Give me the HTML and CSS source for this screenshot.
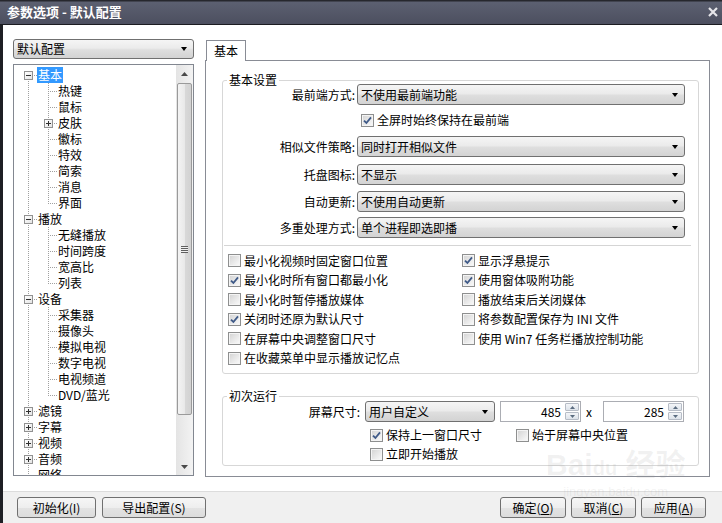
FILE: index.html
```html
<!DOCTYPE html>
<html lang="zh-CN">
<head>
<meta charset="utf-8">
<title>参数选项 - 默认配置</title>
<link rel="stylesheet" href="styles.css">
</head>
<body>
<div class="window">
  <div class="titlebar">
    <span class="title">参数选项 - 默认配置</span>
    <svg class="close" width="10" height="10" viewBox="0 0 10 10"><path d="M1 1 L9 9 M9 1 L1 9" stroke="#e6e6ea" stroke-width="2.2" fill="none"/></svg>
  </div>
  <div class="frame">
    <div class="content">
      <div class="leftcol">
        <div class="combo profile"><span class="combo-text">默认配置</span><span class="arrow"></span></div>
        <div class="treebox">
          <div class="tree">
            <div class="row"><span class="g1 root first"><span class="exp minus"></span></span><span class="lbl sel">基本</span></div>
            <div class="row"><span class="g1"></span><span class="g2"></span><span class="lbl">热键</span></div>
            <div class="row"><span class="g1"></span><span class="g2"></span><span class="lbl">鼠标</span></div>
            <div class="row"><span class="g1"></span><span class="g2"><span class="exp plus"></span></span><span class="lbl">皮肤</span></div>
            <div class="row"><span class="g1"></span><span class="g2"></span><span class="lbl">徽标</span></div>
            <div class="row"><span class="g1"></span><span class="g2"></span><span class="lbl">特效</span></div>
            <div class="row"><span class="g1"></span><span class="g2"></span><span class="lbl">简索</span></div>
            <div class="row"><span class="g1"></span><span class="g2"></span><span class="lbl">消息</span></div>
            <div class="row"><span class="g1"></span><span class="g2 last"></span><span class="lbl">界面</span></div>
            <div class="row"><span class="g1 root"><span class="exp minus"></span></span><span class="lbl">播放</span></div>
            <div class="row"><span class="g1"></span><span class="g2"></span><span class="lbl">无缝播放</span></div>
            <div class="row"><span class="g1"></span><span class="g2"></span><span class="lbl">时间跨度</span></div>
            <div class="row"><span class="g1"></span><span class="g2"></span><span class="lbl">宽高比</span></div>
            <div class="row"><span class="g1"></span><span class="g2 last"></span><span class="lbl">列表</span></div>
            <div class="row"><span class="g1 root"><span class="exp minus"></span></span><span class="lbl">设备</span></div>
            <div class="row"><span class="g1"></span><span class="g2"></span><span class="lbl">采集器</span></div>
            <div class="row"><span class="g1"></span><span class="g2"></span><span class="lbl">摄像头</span></div>
            <div class="row"><span class="g1"></span><span class="g2"></span><span class="lbl">模拟电视</span></div>
            <div class="row"><span class="g1"></span><span class="g2"></span><span class="lbl">数字电视</span></div>
            <div class="row"><span class="g1"></span><span class="g2"></span><span class="lbl">电视频道</span></div>
            <div class="row"><span class="g1"></span><span class="g2 last"></span><span class="lbl">DVD/蓝光</span></div>
            <div class="row"><span class="g1 root"><span class="exp plus"></span></span><span class="lbl">滤镜</span></div>
            <div class="row"><span class="g1 root"><span class="exp plus"></span></span><span class="lbl">字幕</span></div>
            <div class="row"><span class="g1 root"><span class="exp plus"></span></span><span class="lbl">视频</span></div>
            <div class="row"><span class="g1 root"><span class="exp plus"></span></span><span class="lbl">音频</span></div>
            <div class="row"><span class="g1 root lastroot"></span><span class="lbl">网络</span></div>
          </div>
          <div class="vscroll">
            <div class="sbtn"><svg width="7" height="4" viewBox="0 0 7 4"><path d="M0 4 L3.5 0 L7 4Z" fill="#4a4a4a"/></svg></div>
            <div class="track">
              <div class="thumb"><span class="grip"></span></div>
            </div>
            <div class="sbtn"><svg width="7" height="4" viewBox="0 0 7 4"><path d="M0 0 L3.5 4 L7 0Z" fill="#4a4a4a"/></svg></div>
          </div>
        </div>
      </div>

      <div class="rightcol">
        <div class="tabs"><div class="tab">基本</div></div>
        <div class="panel">
          <fieldset class="group g-basic">
            <legend>基本设置</legend>
            <div class="frow r1"><span class="flabel">最前端方式:</span><div class="combo wide"><span class="combo-text">不使用最前端功能</span><span class="arrow"></span></div></div>
            <div class="crow"><label class="chk"><span class="cb on"><svg width="11" height="11" viewBox="0 0 11 11"><path d="M2 5.6 L4.4 8 L9 2.4" stroke="#3f5a88" stroke-width="1.8" fill="none"/></svg></span>全屏时始终保持在最前端</label></div>
            <div class="frow r2"><span class="flabel">相似文件策略:</span><div class="combo wide"><span class="combo-text">同时打开相似文件</span><span class="arrow"></span></div></div>
            <div class="frow r3"><span class="flabel">托盘图标:</span><div class="combo wide"><span class="combo-text">不显示</span><span class="arrow"></span></div></div>
            <div class="frow r4"><span class="flabel">自动更新:</span><div class="combo wide"><span class="combo-text">不使用自动更新</span><span class="arrow"></span></div></div>
            <div class="frow r5"><span class="flabel">多重处理方式:</span><div class="combo wide"><span class="combo-text">单个进程即选即播</span><span class="arrow"></span></div></div>
            <div class="sep"></div>
            <div class="opts">
              <label class="chk"><span class="cb"></span>最小化视频时固定窗口位置</label>
              <label class="chk"><span class="cb on"><svg width="11" height="11" viewBox="0 0 11 11"><path d="M2 5.6 L4.4 8 L9 2.4" stroke="#3f5a88" stroke-width="1.8" fill="none"/></svg></span>最小化时所有窗口都最小化</label>
              <label class="chk"><span class="cb"></span>最小化时暂停播放媒体</label>
              <label class="chk"><span class="cb on"><svg width="11" height="11" viewBox="0 0 11 11"><path d="M2 5.6 L4.4 8 L9 2.4" stroke="#3f5a88" stroke-width="1.8" fill="none"/></svg></span>关闭时还原为默认尺寸</label>
              <label class="chk"><span class="cb"></span>在屏幕中央调整窗口尺寸</label>
              <label class="chk"><span class="cb"></span>在收藏菜单中显示播放记忆点</label>
              <label class="chk"><span class="cb on"><svg width="11" height="11" viewBox="0 0 11 11"><path d="M2 5.6 L4.4 8 L9 2.4" stroke="#3f5a88" stroke-width="1.8" fill="none"/></svg></span>显示浮悬提示</label>
              <label class="chk"><span class="cb on"><svg width="11" height="11" viewBox="0 0 11 11"><path d="M2 5.6 L4.4 8 L9 2.4" stroke="#3f5a88" stroke-width="1.8" fill="none"/></svg></span>使用窗体吸附功能</label>
              <label class="chk"><span class="cb"></span>播放结束后关闭媒体</label>
              <label class="chk"><span class="cb"></span>将参数配置保存为 INI 文件</label>
              <label class="chk"><span class="cb"></span>使用 Win7 任务栏播放控制功能</label>
            </div>
          </fieldset>

          <fieldset class="group g-first">
            <legend>初次运行</legend>
            <div class="srow">
              <span class="slabel">屏幕尺寸:</span>
              <div class="combo small"><span class="combo-text">用户自定义</span><span class="arrow"></span></div>
              <div class="spin"><span class="spin-val">485</span><span class="spin-btns"><span class="sb"><svg width="5" height="3" viewBox="0 0 5 3"><path d="M0 3 L2.5 0 L5 3Z" fill="#5b6c80"/></svg></span><span class="sb"><svg width="5" height="3" viewBox="0 0 5 3"><path d="M0 0 L2.5 3 L5 0Z" fill="#5b6c80"/></svg></span></span></div>
              <span class="times">x</span>
              <div class="spin"><span class="spin-val">285</span><span class="spin-btns"><span class="sb"><svg width="5" height="3" viewBox="0 0 5 3"><path d="M0 3 L2.5 0 L5 3Z" fill="#5b6c80"/></svg></span><span class="sb"><svg width="5" height="3" viewBox="0 0 5 3"><path d="M0 0 L2.5 3 L5 0Z" fill="#5b6c80"/></svg></span></span></div>
            </div>
            <div class="crow2">
              <label class="chk w146"><span class="cb on"><svg width="11" height="11" viewBox="0 0 11 11"><path d="M2 5.6 L4.4 8 L9 2.4" stroke="#3f5a88" stroke-width="1.8" fill="none"/></svg></span>保持上一窗口尺寸</label>
              <label class="chk"><span class="cb"></span>始于屏幕中央位置</label>
            </div>
            <div class="crow3">
              <label class="chk"><span class="cb"></span>立即开始播放</label>
            </div>
          </fieldset>
        </div>
      </div>
    </div>

    <div class="footer">
      <div class="btns-left">
        <button class="btn b-init">初始化(I)</button>
        <button class="btn b-export">导出配置(S)</button>
      </div>
      <div class="btns-right">
        <button class="btn b-ok">确定(<u>O</u>)</button>
        <button class="btn b-cancel">取消(<u>C</u>)</button>
        <button class="btn b-apply">应用(<u>A</u>)</button>
      </div>
    </div>
  </div>
  <div class="watermark"><span class="wm-big">Bai<span class="wm-du">du</span> 经验</span><span class="wm-small">jingyan.baidu.com</span></div>
</div>
</body>
</html>
```

FILE: styles.css
```css
* { box-sizing: border-box; }
html, body { margin: 0; padding: 0; }
body {
  width: 722px;
  height: 523px;
  overflow: hidden;
  font-family: "Noto Sans CJK SC", "Liberation Sans", sans-serif;
  font-size: 12px;
  color: #000;
  background: #fff;
}
.window {
  width: 722px;
  height: 523px;
  display: flex;
  flex-direction: column;
  position: relative;
}

/* title bar */
.titlebar {
  height: 25px;
  flex: none;
  display: flex;
  align-items: center;
  justify-content: space-between;
  padding: 0 4px 0 7px;
  background: linear-gradient(to bottom, #26272d 0, #26272d 1px, #5c6071 2px, #4c4f5f 100%);
  border-bottom: 1px solid #1b1c21;
  color: #fff;
  font-weight: bold;
  font-size: 13px;
}
.title { line-height: 16px; }
.close { display: block; }

/* frame */
.frame {
  flex: 1;
  display: flex;
  flex-direction: column;
  border-left: 3px solid #1e1f24;
  background: #fff;
}
.content {
  flex: 1;
  display: flex;
  padding: 14px 0 0 10px;
}

/* left column */
.leftcol {
  width: 181px;
  display: flex;
  flex-direction: column;
  gap: 5px;
}
.combo {
  display: flex;
  align-items: center;
  justify-content: space-between;
  height: 21px;
  border: 1px solid #707070;
  border-radius: 3px;
  background: linear-gradient(to bottom, #f5f5f5 0%, #ebebeb 45%, #dedede 55%, #d3d3d3 100%);
  padding: 0 6px 0 3px;
  line-height: 16px;
  white-space: nowrap;
}
.combo.profile { height: 20px; }
.arrow {
  width: 0;
  height: 0;
  border-left: 3.5px solid transparent;
  border-right: 3.5px solid transparent;
  border-top: 4px solid #000;
  flex: none;
}

.treebox {
  height: 412px;
  border: 1px solid #828790;
  display: flex;
  overflow: hidden;
}
.tree {
  flex: 1;
  padding-top: 2px;
  overflow: hidden;
}
.row {
  display: flex;
  height: 16px;
  line-height: 16px;
  white-space: nowrap;
}
.g1, .g2 {
  flex: none;
  height: 16px;
  display: flex;
  align-items: flex-start;
}
.g1 {
  width: 23px;
  background: repeating-linear-gradient(to bottom, #a0a0a0 0 1px, transparent 1px 2px) 14px 0 / 1px 16px no-repeat;
}
.g1.root {
  background:
    repeating-linear-gradient(to bottom, #a0a0a0 0 1px, transparent 1px 2px) 14px 0 / 1px 16px no-repeat,
    repeating-linear-gradient(to right, #a0a0a0 0 1px, transparent 1px 2px) 14px 8px / 9px 1px no-repeat;
}
.g1.root.first {
  background:
    repeating-linear-gradient(to bottom, #a0a0a0 0 1px, transparent 1px 2px) 14px 8px / 1px 8px no-repeat,
    repeating-linear-gradient(to right, #a0a0a0 0 1px, transparent 1px 2px) 14px 8px / 9px 1px no-repeat;
}
.g1.root.lastroot {
  background:
    repeating-linear-gradient(to bottom, #a0a0a0 0 1px, transparent 1px 2px) 14px 0 / 1px 8px no-repeat,
    repeating-linear-gradient(to right, #a0a0a0 0 1px, transparent 1px 2px) 14px 8px / 9px 1px no-repeat;
}
.g2 {
  width: 20px;
  background:
    repeating-linear-gradient(to bottom, #a0a0a0 0 1px, transparent 1px 2px) 11px 0 / 1px 16px no-repeat,
    repeating-linear-gradient(to right, #a0a0a0 0 1px, transparent 1px 2px) 11px 8px / 9px 1px no-repeat;
}
.g2.last {
  background:
    repeating-linear-gradient(to bottom, #a0a0a0 0 1px, transparent 1px 2px) 11px 0 / 1px 9px no-repeat,
    repeating-linear-gradient(to right, #a0a0a0 0 1px, transparent 1px 2px) 11px 8px / 9px 1px no-repeat;
}
.exp {
  width: 9px;
  height: 9px;
  margin-top: 4px;
  border: 1px solid #919191;
  flex: none;
}
.g1 .exp { margin-left: 10px; }
.g2 .exp { margin-left: 7px; }
.exp.minus {
  background:
    linear-gradient(#2f2f2f, #2f2f2f) 1px 3px / 5px 1px no-repeat,
    linear-gradient(135deg, #ffffff 0%, #e4e4e4 100%);
}
.exp.plus {
  background:
    linear-gradient(#2f2f2f, #2f2f2f) 1px 3px / 5px 1px no-repeat,
    linear-gradient(#2f2f2f, #2f2f2f) 3px 1px / 1px 5px no-repeat,
    linear-gradient(135deg, #ffffff 0%, #e4e4e4 100%);
}
.lbl {
  padding: 0 1px;
  height: 16px;
}
.lbl.sel {
  background: #3399ff;
  color: #fff;
}

/* scrollbar */
.vscroll {
  width: 17px;
  flex: none;
  display: flex;
  flex-direction: column;
  background: linear-gradient(to right, #e4e4e4 0%, #f3f3f3 100%);
}
.sbtn {
  height: 17px;
  flex: none;
  display: flex;
  align-items: center;
  justify-content: center;
}
.sbtn svg { display: block; }
.track {
  flex: 1;
  padding: 1px 1px 0 1px;
}
.thumb {
  height: 332px;
  border: 1px solid #9a9a9a;
  border-radius: 2px;
  background: linear-gradient(to right, #f4f4f4 0%, #e9e9e9 50%, #d9d9d9 51%, #d2d2d2 100%);
  display: flex;
  align-items: center;
  justify-content: center;
}
.grip {
  width: 7px;
  height: 7px;
  background: repeating-linear-gradient(to bottom, #5f5f5f 0 1px, #f0f0f0 1px 2px);
}

/* right column */
.rightcol {
  width: 505px;
  margin-left: 11px;
  display: flex;
  flex-direction: column;
}
.tabs {
  display: flex;
  height: 22px;
  padding: 1px 0 0 1px;
  margin-bottom: -1px;
  position: relative;
  z-index: 1;
}
.tab {
  height: 21px;
  padding: 0 7px;
  border: 1px solid #898c95;
  border-bottom: none;
  background: #fff;
  line-height: 19px;
}
.panel {
  height: 417px;
  border: 1px solid #898c95;
  padding: 0 10px 0 16px;
}

.group {
  margin: 0;
  padding: 0 0 0 0;
  border: 1px solid #d7d7d7;
  border-radius: 3px;
  min-width: 0;
}
.group legend {
  margin-left: 4px;
  padding: 0 2px;
  line-height: 16px;
  font-size: 12px;
}
.g-basic {
  margin-top: 11px;
  height: 302px;
}
.frow {
  display: flex;
  align-items: center;
  height: 21px;
}
.flabel {
  width: 134px;
  text-align: right;
  padding-right: 2px;
  white-space: nowrap;
}
.combo.wide { width: 328px; }
.r1 { margin-top: -4px; }
.r2 { margin-top: 8px; }
.r3 { margin-top: 7px; }
.r4 { margin-top: 6px; }
.r5 { margin-top: 5px; }
.crow {
  height: 16px;
  margin: 7px 0 0 138px;
  display: flex;
}
.sep {
  height: 1px;
  margin: 7px 7px 0 1px;
  background: #d5d5d5;
}

.chk {
  display: flex;
  align-items: center;
  gap: 3px;
  white-space: nowrap;
  line-height: 16px;
}
.cb {
  width: 13px;
  height: 13px;
  flex: none;
  border: 1px solid #8e8f8f;
  background: linear-gradient(135deg, #d2d2d2 0%, #e9e9e9 55%, #fbfbfb 100%);
  box-shadow: inset 0 0 0 1px #f4f4f4;
  display: flex;
  align-items: center;
  justify-content: center;
}
.cb svg { display: block; }

.opts {
  display: grid;
  grid-template-columns: 234px 1fr;
  grid-template-rows: repeat(6, 19.5px);
  grid-auto-flow: column;
  margin: 5px 0 0 5px;
}

/* first run group */
.g-first {
  margin-top: 14px;
  height: 78px;
}
.srow {
  display: flex;
  align-items: center;
  height: 21px;
  margin-top: -3px;
}
.slabel {
  width: 142px;
  text-align: right;
  padding-right: 5px;
  white-space: nowrap;
}
.combo.small { width: 130px; }
.spin {
  width: 81px;
  height: 21px;
  margin-left: 5px;
  border: 1px solid #abadb3;
  background: #fff;
  display: flex;
  align-items: stretch;
}
.spin-val {
  flex: 1;
  text-align: right;
  line-height: 19px;
  padding-right: 4px;
}
.spin-btns {
  width: 15px;
  display: flex;
  flex-direction: column;
  padding: 1px 1px 1px 0;
  gap: 1px;
}
.sb {
  flex: 1;
  border: 1px solid #b6bcc6;
  border-radius: 1px;
  background: linear-gradient(to bottom, #f3f5f8, #dde3ea);
  display: flex;
  align-items: center;
  justify-content: center;
}
.sb svg { display: block; }
.times {
  width: 17px;
  text-align: left;
  padding-left: 5px;
}
.crow2 {
  display: flex;
  height: 16px;
  margin: 5px 0 0 147px;
}
.w146 { width: 146px; }
.crow3 {
  display: flex;
  height: 16px;
  margin: 3px 0 0 147px;
}

/* footer */
.footer {
  height: 32px;
  flex: none;
  border-top: 1px solid #dcdcdc;
  background: #f0f0f0;
  display: flex;
  padding: 5px 16px 0 14px;
}
.btns-left, .btns-right {
  display: flex;
  gap: 6px;
  height: 21px;
}
.btns-right { margin-left: auto; gap: 5px; }
.btn {
  height: 21px;
  border: 1px solid #707070;
  border-radius: 3px;
  background: linear-gradient(to bottom, #f6f6f6 0%, #eeeeee 50%, #e3e3e3 51%, #dcdcdc 100%);
  font-family: "Noto Sans CJK SC", "Liberation Sans", sans-serif;
  font-size: 12px;
  line-height: 16px;
  color: #000;
  padding: 0;
}
.b-init { width: 79px; }
.b-export { width: 104px; }
.b-ok { width: 66px; }
.b-cancel { width: 65px; }
.b-apply { width: 65px; }

/* watermark overlay */
.watermark {
  position: absolute;
  left: 546px;
  top: 448px;
  display: flex;
  flex-direction: column;
  align-items: center;
  color: rgba(150, 150, 150, 0.13);
  pointer-events: none;
}
.wm-big {
  font-family: "Liberation Sans", "Noto Sans CJK SC", sans-serif;
  font-size: 30px;
  font-weight: bold;
  line-height: 34px;
}
.wm-du { font-size: 20px; }
.wm-small {
  font-family: "Liberation Sans", sans-serif;
  font-size: 13px;
  line-height: 14px;
}
```
